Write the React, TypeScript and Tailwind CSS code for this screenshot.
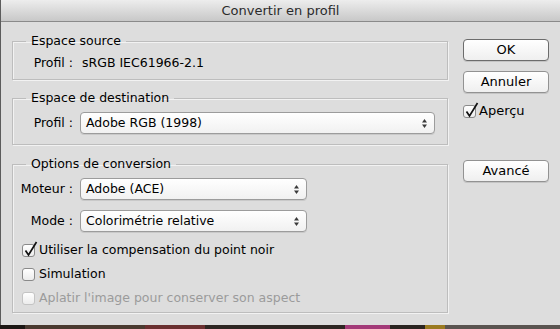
import React from 'react';

function Arrows() {
  return (
    <svg width="5" height="9" viewBox="0 0 5 9" className="shrink-0">
      <polygon points="0,3.5 2.5,0 5,3.5" fill="#3a3a3a" />
      <polygon points="0,5.5 2.5,9 5,5.5" fill="#3a3a3a" />
    </svg>
  );
}

function Select({ value, width }: { value: string; width: string }) {
  return (
    <div
      className={`${width} flex h-[22px] items-center justify-between rounded-[4px] border border-[#9c9c9c] bg-gradient-to-b from-white to-[#f1f1f1] pl-[5px] pr-[7px] shadow-[0_1px_0_#c9c9c9]`}
    >
      <span>{value}</span>
      <Arrows />
    </div>
  );
}

function CheckBox({ checked, disabled }: { checked?: boolean; disabled?: boolean }) {
  return (
    <span
      className={`relative h-[13px] w-[13px] shrink-0 rounded-[3px] border bg-gradient-to-b from-white to-[#ececec] ${
        disabled ? 'border-[#c4c4c4]' : 'border-[#8a8a8a]'
      }`}
    >
      {checked && (
        <svg width="15" height="16" viewBox="0 0 15 16" className="absolute -top-[4px] left-[0px]">
          <path d="M2.5 9.5 L5.5 14 L13.5 1" fill="none" stroke="#111" strokeWidth="1.7" />
        </svg>
      )}
    </span>
  );
}

function Button({ label, primary }: { label: string; primary?: boolean }) {
  return (
    <div
      className={`flex h-[22px] w-[86px] items-center justify-center rounded-[4px] border bg-gradient-to-b from-white to-[#efefef] text-[13px] text-black shadow-[0_1px_0_#c4c4c4] ${
        primary ? 'border-[#6c6c6c]' : 'border-[#929292]'
      }`}
    >
      {label}
    </div>
  );
}

const groupClass =
  'border border-[#bdbdbd] shadow-[inset_1px_1px_0_#f2f2f2,1px_1px_0_#f2f2f2]';
const legendClass = 'ml-[13px] px-[5px] leading-[16px]';

export default function App() {
  return (
    <div className="flex h-[329px] w-[560px] flex-col overflow-hidden bg-[#2a221d] font-['DejaVu_Sans',sans-serif] text-[12.5px] text-black">
      <div className="flex h-[325px] flex-col border-l border-[#5c5c5c] bg-[#dddddd]">
        <div className="flex h-[22px] shrink-0 items-center justify-center border-b border-[#8a8a8a] bg-gradient-to-b from-[#ededed] to-[#c8c8c8] text-[13px] text-[#2b2b2b]">
          Convertir en profil
        </div>

        <div className="flex flex-1">
          <div className="ml-[11px] flex w-[436px] flex-col pt-[11px]">
            <fieldset className={`${groupClass} pb-[8px] pt-[6px]`}>
              <legend className={legendClass}>Espace source</legend>
              <div className="flex h-[16px] items-center gap-[7px]">
                <span className="w-[60px] shrink-0 text-right">Profil :</span>
                <span className="pl-[2px]">sRGB IEC61966-2.1</span>
              </div>
            </fieldset>

            <fieldset className={`${groupClass} mt-[10px] pb-[10px] pt-[6px]`}>
              <legend className={legendClass}>Espace de destination</legend>
              <div className="flex items-center gap-[7px]">
                <span className="w-[60px] shrink-0 text-right">Profil :</span>
                <Select value="Adobe RGB (1998)" width="w-[355px]" />
              </div>
            </fieldset>

            <fieldset className={`${groupClass} mt-[11px] pb-[6px] pt-[6px]`}>
              <legend className={legendClass}>Options de conversion</legend>
              <div className="flex flex-col gap-[10px]">
                <div className="flex items-center gap-[7px]">
                  <span className="w-[60px] shrink-0 text-right">Moteur :</span>
                  <Select value="Adobe (ACE)" width="w-[227px]" />
                </div>
                <div className="flex items-center gap-[7px]">
                  <span className="w-[60px] shrink-0 text-right">Mode :</span>
                  <Select value="Colorimétrie relative" width="w-[227px]" />
                </div>
              </div>
              <div className="mt-[10px] flex flex-col gap-[8px] pl-[9px]">
                <div className="flex h-[16px] items-center gap-[4px]">
                  <CheckBox checked />
                  <span>Utiliser la compensation du point noir</span>
                </div>
                <div className="flex h-[16px] items-center gap-[4px]">
                  <CheckBox />
                  <span>Simulation</span>
                </div>
                <div className="flex h-[16px] items-center gap-[4px]">
                  <CheckBox disabled />
                  <span className="text-[#9b9b9b]">Aplatir l'image pour conserver son aspect</span>
                </div>
              </div>
            </fieldset>
          </div>

          <div className="ml-[15px] flex w-[86px] flex-col pt-[17px]">
            <Button label="OK" primary />
            <div className="mt-[10px]">
              <Button label="Annuler" />
            </div>
            <div className="mt-[10px] flex h-[16px] items-center gap-[3px]">
              <CheckBox checked />
              <span className="text-[13px]">Aperçu</span>
            </div>
            <div className="mt-[41px]">
              <Button label="Avancé" />
            </div>
          </div>
        </div>
      </div>

      <div className="flex h-[4px]">
        <div className="w-[25px] bg-[#1c1714]" />
        <div className="w-[120px] bg-[#4a3a30]" />
        <div className="w-[60px] bg-[#6a3030]" />
        <div className="w-[140px] bg-[#2e2622]" />
        <div className="w-[45px] bg-[#a33a78]" />
        <div className="w-[35px] bg-[#2a2420]" />
        <div className="w-[20px] bg-[#9a7a20]" />
        <div className="flex-1 bg-[#5a5450]" />
      </div>
    </div>
  );
}
